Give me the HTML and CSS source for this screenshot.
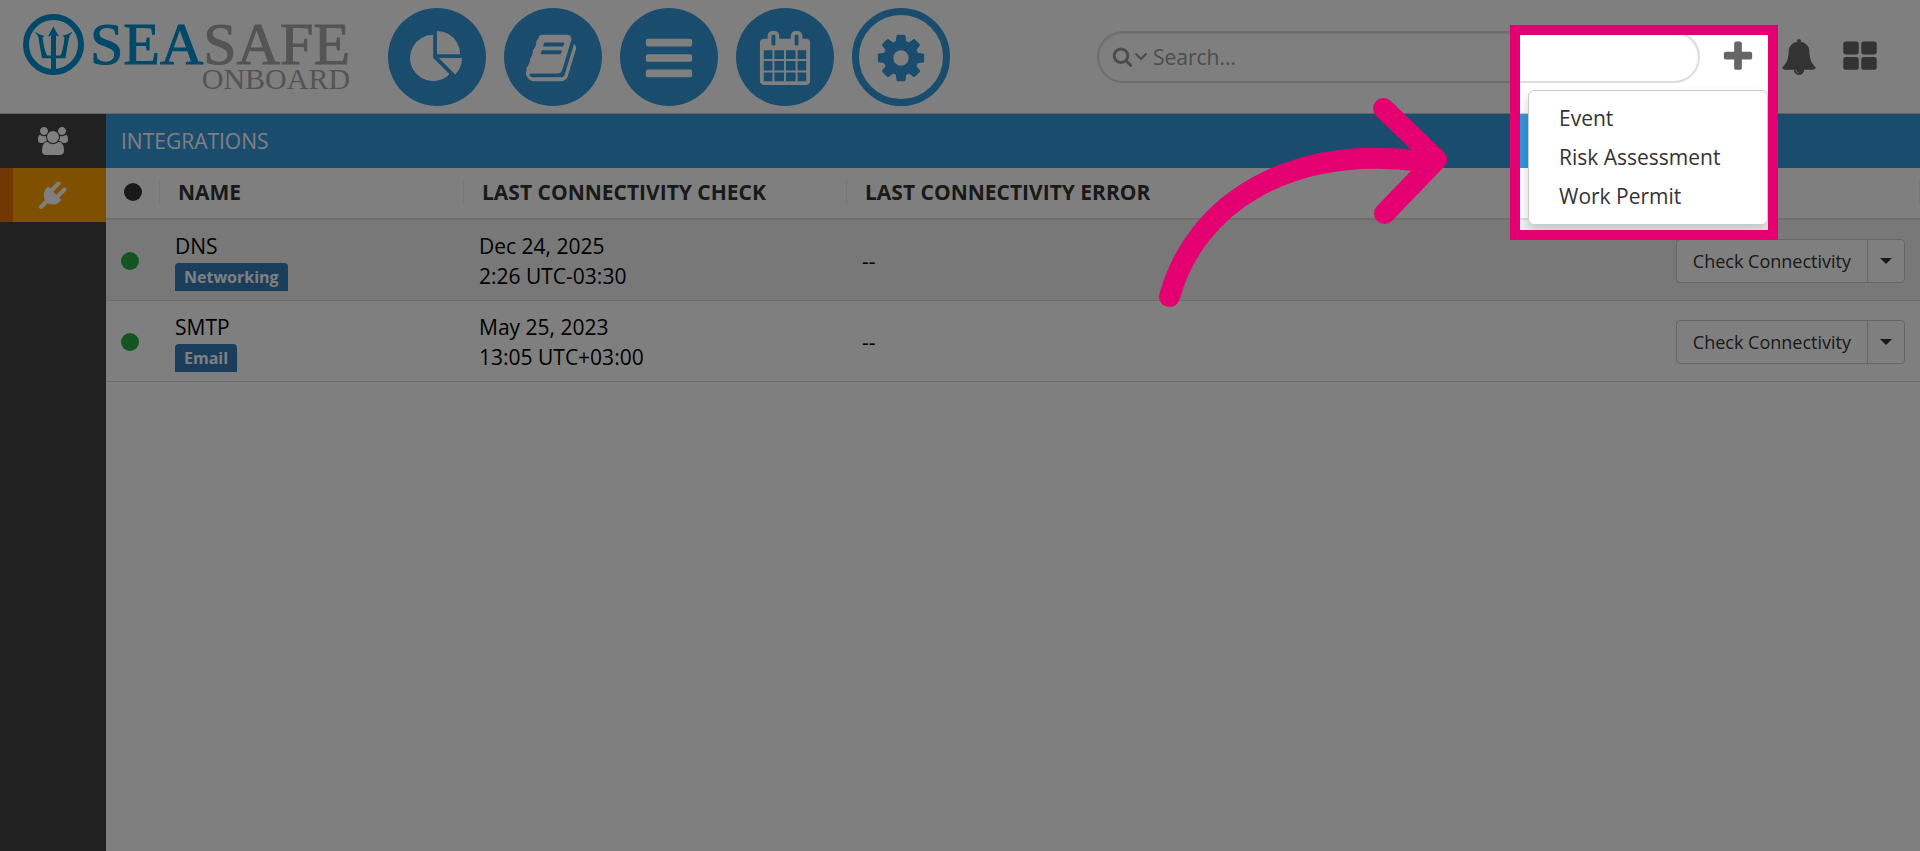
FILE: index.html
```html
<!DOCTYPE html>
<html lang="en">
<head>
  <meta charset="UTF-8">
  <title>SeaSafe Onboard - Integrations</title>
  <link rel="stylesheet" href="styles.css">
</head>
<body>
  <header class="topbar">
    <a class="logo" href="#">
      <svg class="logo-mark" viewBox="0 0 61 61">
        <circle cx="30.500" cy="30.500" r="27.500" fill="none" stroke="currentColor" stroke-width="6"/>
        <path fill="currentColor" d="M30.300 12.500L36 22.500L33 21.500V41.500H37.500C40 36 41 29 41.500 23.500L39.500 21.500C43 21 46 20 49.500 17.500C48.500 20 46.500 21 46 24C44.500 31 43.500 38 42.500 44.300H33V56H28V44.300H19C18 38 16.500 31 15.500 24C15 21 13 20 11.500 17.500C15 20 18 21 21.500 22L19.500 23.500C20.500 30 21.500 36 24 41.500H28V21.500L25 22.500Z"/>
      </svg>
      <span class="logo-text">
        <span class="logo-name"><b>SEA</b>SAFE</span>
        <span class="logo-sub">ONBOARD</span>
      </span>
    </a>

    <nav class="main-nav">
      <a href="#" class="nav-circle" aria-label="Dashboard">
        <svg viewBox="0 0 1792 1792"><path d="M768 890l546 546q-106 108-247.500 168t-298.500 60q-209 0-385.500-103t-279.500-279.500-103-385.500 103-385.500 279.500-279.500 385.500-103v762zm187 6h773q0 157-60 298.500t-168 247.500zm709-128h-768v-768q209 0 385.500 103t279.500 279.500 103 385.500z"/></svg>
      </a>
      <a href="#" class="nav-circle" aria-label="Library">
        <svg viewBox="0 0 1792 1792"><path d="M1639 478q40 57 18 129l-275 906q-19 64-76.500 107.500t-122.500 43.500h-923q-77 0-148.500-53.500t-99.500-131.500q-24-67-2-127 0-4 3-27t4-37q1-8-3-21.500t-3-19.500q2-11 8-21t16.500-23.500 16.500-23.500q23-38 45-91.500t30-91.500q3-10 .5-30t-.5-28q3-11 17-28t17-23q21-36 42-92t25-90q1-9-2.500-32t.5-28q4-13 22-30.500t22-22.500q19-26 42.500-84.500t27.500-96.500q1-8-3-25.500t-2-26.500q2-8 9-18t18-23 17-21q8-12 16.500-30.500t15-35 16-36 19.500-32 26.500-23.500 36-11.500 47.500 5.500l-1 3q38-9 51-9h761q74 0 114 56t18 130l-274 906q-36 119-71.500 153.500t-128.500 34.500h-869q-27 0-38 15-11 16-1 43 24 70 144 70h923q29 0 56-15.500t35-41.500l300-987q7-22 5-57 38 15 59 43zm-1064 2q-4 13 2 22.500t20 9.500h608q13 0 25.500-9.500t16.500-22.500l21-64q4-13-2-22.500t-20-9.500h-608q-13 0-25.500 9.500t-16.500 22.500zm-83 256q-4 13 2 22.500t20 9.500h608q13 0 25.500-9.500t16.500-22.500l21-64q4-13-2-22.500t-20-9.500h-608q-13 0-25.500 9.500t-16.500 22.500z"/></svg>
      </a>
      <a href="#" class="nav-circle" aria-label="Lists">
        <svg viewBox="0 0 1792 1792"><rect x="128" y="256" width="1536" height="256" rx="64"/><rect x="128" y="768" width="1536" height="256" rx="64"/><rect x="128" y="1280" width="1536" height="256" rx="64"/></svg>
      </a>
      <a href="#" class="nav-circle" aria-label="Calendar">
        <svg viewBox="0 0 1792 1792"><path d="M192 1664h288v-288h-288v288zm352 0h320v-288h-320v288zm-352-352h288v-320h-288v320zm352 0h320v-320h-320v320zm-352-384h288v-288h-288v288zm736 736h320v-288h-320v288zm-384-736h320v-288h-320v288zm768 736h288v-288h-288v288zm-384-352h320v-320h-320v320zm-352-864v-288q0-13-9.500-22.500t-22.500-9.500h-64q-13 0-22.500 9.500t-9.500 22.500v288q0 13 9.500 22.500t22.500 9.500h64q13 0 22.500-9.500t9.500-22.500zm736 864h288v-320h-288v320zm-384-384h320v-288h-320v288zm384 0h288v-288h-288v288zm32-480v-288q0-13-9.500-22.500t-22.500-9.500h-64q-13 0-22.500 9.500t-9.500 22.500v288q0 13 9.500 22.500t22.500 9.500h64q13 0 22.500-9.500t9.500-22.500zm384-64v1280q0 52-38 90t-90 38h-1408q-52 0-90-38t-38-90v-1280q0-52 38-90t90-38h128v-96q0-66 47-113t113-47h64q66 0 113 47t47 113v96h384v-96q0-66 47-113t113-47h64q66 0 113 47t47 113v96h128q52 0 90 38t38 90z"/></svg>
      </a>
      <a href="#" class="nav-circle active" aria-label="Settings">
        <svg viewBox="0 0 1792 1792"><path d="M1152 896q0-106-75-181t-181-75-181 75-75 181 75 181 181 75 181-75 75-181zm512-109v222q0 12-8 23t-20 13l-185 28q-19 54-39 91 35 50 107 138 10 12 10 25t-9 23q-27 37-99 108t-94 71q-12 0-26-9l-138-108q-44 23-91 38-16 136-29 186-7 28-36 28h-222q-14 0-24.500-8.500t-11.500-21.500l-28-184q-49-16-90-37l-141 107q-10 9-25 9-14 0-25-11-126-114-165-168-7-10-7-23 0-12 8-23 15-21 51-66.500t54-70.500q-27-50-41-99l-183-27q-13-2-21-12.500t-8-23.500v-222q0-12 8-23t19-13l186-28q14-46 39-92-40-57-107-138-10-12-10-24 0-10 9-23 26-36 98.500-107.500t94.500-71.500q13 0 26 10l138 107q44-23 91-38 16-136 29-186 7-28 36-28h222q14 0 24.500 8.500t11.500 21.500l28 184q49 16 90 37l142-107q9-9 24-9 13 0 25 10 129 119 165 170 7 8 7 22 0 12-8 23-15 21-51 66.500t-54 70.500q26 50 41 98l183 28q13 2 21 12.500t8 23.500z"/></svg>
      </a>
    </nav>

    <label class="search">
      <svg class="search-icon" viewBox="0 0 1792 1792"><path d="M1216 832q0-185-131.500-316.500t-316.500-131.500-316.500 131.500-131.500 316.500 131.500 316.500 316.500 131.500 316.500-131.500 131.500-316.500zm512 832q0 52-38 90t-90 38q-54 0-90-38l-343-342q-179 124-399 124-143 0-273.500-55.500t-225-150-150-225-55.500-273.500 55.500-273.500 150-225 225-150 273.500-55.500 273.500 55.500 225 150 150 225 55.500 273.500q0 220-124 399l343 343q37 37 37 90z"/></svg>
      <svg class="search-chevron" viewBox="0 0 14 10"><path d="M1.500 1.500L7 7L12.500 1.500" fill="none" stroke="currentColor" stroke-width="2"/></svg>
      <input type="text" placeholder="Search..." aria-label="Search">
    </label>

    <div class="actions">
      <div class="add">
        <button type="button" class="icon-btn" aria-label="Add">
          <svg viewBox="0 0 1792 1792"><path d="M1600 736v192q0 40-28 68t-68 28h-416v416q0 40-28 68t-68 28h-192q-40 0-68-28t-28-68v-416h-416q-40 0-68-28t-28-68v-192q0-40 28-68t68-28h416v-416q0-40 28-68t68-28h192q40 0 68 28t28 68v416h416q40 0 68 28t28 68z"/></svg>
        </button>
        <div class="add-menu">
          <a href="#">Event</a>
          <a href="#">Risk Assessment</a>
          <a href="#">Work Permit</a>
        </div>
      </div>
      <button type="button" class="icon-btn" aria-label="Notifications">
        <svg viewBox="0 0 1792 1792"><path d="M912 1696q0-16-16-16-59 0-101.500-42.500t-42.500-101.500q0-16-16-16t-16 16q0 73 51.500 124.500t124.500 51.500q16 0 16-16zm816-288q0 52-38 90t-90 38h-448q0 106-75 181t-181 75-181-75-75-181h-448q-52 0-90-38t-38-90q50-42 91-88t85-119.500 74.500-158.500 50-206 19.500-260q0-152 117-282.500t307-158.500q-8-19-8-39 0-40 28-68t68-28 68 28 28 68q0 20-8 39 190 28 307 158.500t117 282.500q0 139 19.500 260t50 206 74.500 158.500 85 119.500 91 88z"/></svg>
      </button>
      <button type="button" class="icon-btn" aria-label="Apps">
        <svg viewBox="0 0 1792 1792"><rect x="64" y="128" width="768" height="640" rx="128"/><rect x="960" y="128" width="768" height="640" rx="128"/><rect x="64" y="896" width="768" height="640" rx="128"/><rect x="960" y="896" width="768" height="640" rx="128"/></svg>
      </button>
    </div>
  </header>

  <div class="page">
    <aside class="sidebar">
      <a href="#" class="side-item" aria-label="Users">
        <svg viewBox="0 0 1920 1792"><path d="M593 896q-162 5-265 128h-134q-82 0-138-40.500t-56-118.500q0-353 124-353 6 0 43.500 21t97.500 42.500 119 21.500q67 0 133-23-5 37-5 66 0 139 81 256zm1071 637q0 120-73 189.500t-194 69.500h-874q-121 0-194-69.500t-73-189.500q0-53 3.500-103.500t14-109 26.500-108.500 43-97.500 62-81 85.500-53.500 111.500-20q10 0 43 21.500t73 48 107 48 135 21.500 135-21.500 107-48 73-48 43-21.500q61 0 111.500 20t85.500 53.500 62 81 43 97.500 26.500 108.500 14 109 3.500 103.500zm-1024-1277q0 106-75 181t-181 75-181-75-75-181 75-181 181-75 181 75 75 181zm704 384q0 159-112.500 271.500t-271.500 112.500-271.500-112.500-112.500-271.500 112.500-271.500 271.500-112.500 271.500 112.500 112.500 271.500zm576 225q0 78-56 118.500t-138 40.500h-134q-103-123-265-128 81-117 81-256 0-29-5-66 66 23 133 23 59 0 119-21.500t97.500-42.500 43.500-21q124 0 124 353zm-128-609q0 106-75 181t-181 75-181-75-75-181 75-181 181-75 181 75 75 181z"/></svg>
      </a>
      <a href="#" class="side-item active" aria-label="Integrations">
        <svg viewBox="0 0 28 28">
          <path d="M9 5.500L22.500 19C19 23.500 13 25 7.500 21.500C3 16 4.500 9 9 5.500Z"/>
          <path d="M2 26L9 19M13 9L19.500 2.500M19 15L25.500 8.500" fill="none" stroke="currentColor" stroke-width="4" stroke-linecap="round"/>
        </svg>
      </a>
    </aside>

    <main class="content">
      <h1 class="title">INTEGRATIONS</h1>
      <table class="grid">
        <thead>
          <tr>
            <th class="col-status"><div><span class="dot"></span></div></th>
            <th class="col-name"><div>NAME</div></th>
            <th class="col-check"><div>LAST CONNECTIVITY CHECK</div></th>
            <th colspan="2"><div>LAST CONNECTIVITY ERROR</div></th>
          </tr>
        </thead>
        <tbody>
          <tr>
            <td><span class="dot ok"></span></td>
            <td>DNS<br><span class="tag">Networking</span></td>
            <td>Dec 24, 2025<br>2:26 UTC-03:30</td>
            <td>--</td>
            <td class="col-action">
              <div class="btn-group">
                <button type="button">Check Connectivity</button>
                <button type="button" class="toggle" aria-label="More"><span class="caret"></span></button>
              </div>
            </td>
          </tr>
          <tr>
            <td><span class="dot ok"></span></td>
            <td>SMTP<br><span class="tag">Email</span></td>
            <td>May 25, 2023<br>13:05 UTC+03:00</td>
            <td>--</td>
            <td class="col-action">
              <div class="btn-group">
                <button type="button">Check Connectivity</button>
                <button type="button" class="toggle" aria-label="More"><span class="caret"></span></button>
              </div>
            </td>
          </tr>
        </tbody>
      </table>
    </main>
  </div>

  <!-- guide layer: dims the page around the add menu -->
  <div class="guide">
    <div class="spotlight"></div>
    <svg class="guide-arrow" viewBox="0 0 300 220">
      <path d="M19.500 206.500C46 112 140 55 270 71M233.500 18.500L286.500 69.500L234.500 123.500"/>
    </svg>
  </div>
</body>
</html>
```

FILE: styles.css
```css
* { box-sizing: border-box; }
body {
  margin: 0;
  min-height: 100vh;
  display: flex;
  flex-direction: column;
  font-family: 'Open Sans', 'Noto Sans', sans-serif;
  font-size: 21px;
  line-height: 30px;
  color: #000;
  background: #fff;
}
a { text-decoration: none; color: inherit; }
svg { display: block; fill: currentColor; }
button, input { font-family: inherit; }

/* top bar */
.topbar {
  display: flex;
  align-items: center;
  height: 114px;
  padding: 0 42px 0 23px;
  border-bottom: 1px solid #ccc;
}
.logo {
  display: flex;
  gap: 6px;
  margin-bottom: 10px;
  color: #0090d0;
  font-family: 'Liberation Serif', serif;
}
.logo-mark { width: 61px; height: 61px; }
.logo-text {
  display: flex;
  flex-direction: column;
  align-items: flex-end;
  padding-top: 5px;
  color: #a8a8a8;
}
.logo-name {
  font-size: 60px;
  line-height: 50px;
  -webkit-text-stroke: 1px currentColor;
}
.logo-name b { font-weight: normal; color: #0090d0; }
.logo-sub { font-size: 30px; line-height: 20px; }

.main-nav {
  display: flex;
  gap: 18px;
  margin-left: 38px;
}
.nav-circle {
  display: flex;
  align-items: center;
  justify-content: center;
  width: 98px;
  height: 98px;
  padding-top: 2px;
  border-radius: 50%;
  background: #3498db;
  color: #fff;
}
.nav-circle svg { width: 54px; height: 54px; }
.nav-circle.active {
  background: #fff;
  border: 7px solid #3498db;
  color: #3498db;
}

.search {
  display: flex;
  align-items: center;
  width: 603px;
  height: 52px;
  margin-left: auto;
  padding: 0 13px;
  border: 2px solid #ddd;
  border-radius: 26px;
  box-shadow: inset 0 1px 2px rgba(0,0,0,0.1);
  color: #999;
}
.search-icon { width: 21px; height: 21px; }
.search-chevron { width: 14px; height: 10px; margin: 0 5px 0 1px; }
.search input {
  flex: 1;
  min-width: 0;
  padding: 0;
  border: 0;
  outline: 0;
  background: none;
  font-size: 21px;
}
.search input::placeholder { color: #999; }

.actions {
  display: flex;
  gap: 25px;
  margin-left: 20px;
}
.icon-btn {
  padding: 0;
  border: 0;
  background: none;
  color: #666;
  cursor: pointer;
}
.icon-btn svg { width: 36px; height: 36px; }
.add { position: relative; display: flex; }
.add-menu {
  position: absolute;
  top: 51px;
  right: -12px;
  z-index: 1;
  display: flex;
  flex-direction: column;
  width: 240px;
  padding: 8px 0;
  border: 1px solid #ccc;
  border-radius: 6px;
  background: #fff;
  box-shadow: 0 6px 12px rgba(0,0,0,0.18);
  color: #333;
}
.add-menu a { padding: 4px 30px 5px; }

/* page body */
.page { display: flex; flex: 1; }
.sidebar { width: 106px; background: #434343; }
.side-item {
  display: flex;
  align-items: center;
  justify-content: center;
  height: 54px;
  color: #fff;
}
.side-item svg { height: 28px; }
.side-item.active {
  background: #ffa000;
  border-left: 13px solid #e07000;
  padding-right: 13px;
}
.content { flex: 1; min-width: 0; }
.title {
  margin: 0;
  padding: 12px 15px;
  font-size: 21px;
  font-weight: normal;
  background: #3498db;
  color: #fff;
}

.grid {
  width: 100%;
  border-collapse: separate;
  border-spacing: 0;
}
.grid th {
  padding: 11px 0 13px;
  border-bottom: 2px solid #ddd;
  text-align: left;
  font-weight: bold;
  color: #333;
}
.grid th div {
  display: flex;
  align-items: center;
  height: 26px;
  padding-left: 18px;
  border-right: 1px solid #eee;
}
.grid td {
  padding: 11px 15px 9px;
  border-bottom: 1px solid #ddd;
}
.grid tbody tr:nth-child(odd) { background: #f0f0f0; }
.col-status { width: 54px; }
.col-name { width: 304px; }
.col-check { width: 383px; }
.dot {
  display: block;
  width: 18px;
  height: 18px;
  border-radius: 50%;
  background: #333;
}
.dot.ok { background: #28a745; }
.tag {
  display: inline-block;
  vertical-align: top;
  margin-top: 2px;
  padding: 0 9px;
  border-radius: 4px 4px 0 0;
  background: #337ab7;
  color: #fff;
  font-size: 16px;
  font-weight: bold;
  line-height: 28px;
}
.col-action { width: 260px; }
.btn-group { display: flex; justify-content: flex-end; }
.btn-group button {
  height: 44px;
  padding: 0 16px;
  border: 1px solid #ccc;
  border-radius: 4px 0 0 4px;
  background: #fff;
  color: #333;
  font-size: 18px;
  white-space: nowrap;
}
.btn-group .toggle {
  width: 38px;
  margin-left: -1px;
  padding: 0 12px;
  border-radius: 0 4px 4px 0;
}
.caret {
  display: block;
  border-top: 6px solid #333;
  border-left: 6px solid transparent;
  border-right: 6px solid transparent;
}

/* guide layer */
.guide {
  position: absolute;
  inset: 0;
  z-index: 10;
  overflow: hidden;
  pointer-events: none;
}
.spotlight {
  position: absolute;
  top: 25px;
  right: 142px;
  width: 268px;
  height: 215px;
  border: 10px solid #e50071;
  box-shadow: 0 0 0 3000px rgba(0,0,0,0.5);
}
.guide-arrow {
  position: absolute;
  top: 90px;
  right: 470px;
  width: 300px;
  height: 220px;
  fill: none;
  stroke: #e50071;
  stroke-width: 21px;
  stroke-linecap: round;
  stroke-linejoin: round;
}
```
